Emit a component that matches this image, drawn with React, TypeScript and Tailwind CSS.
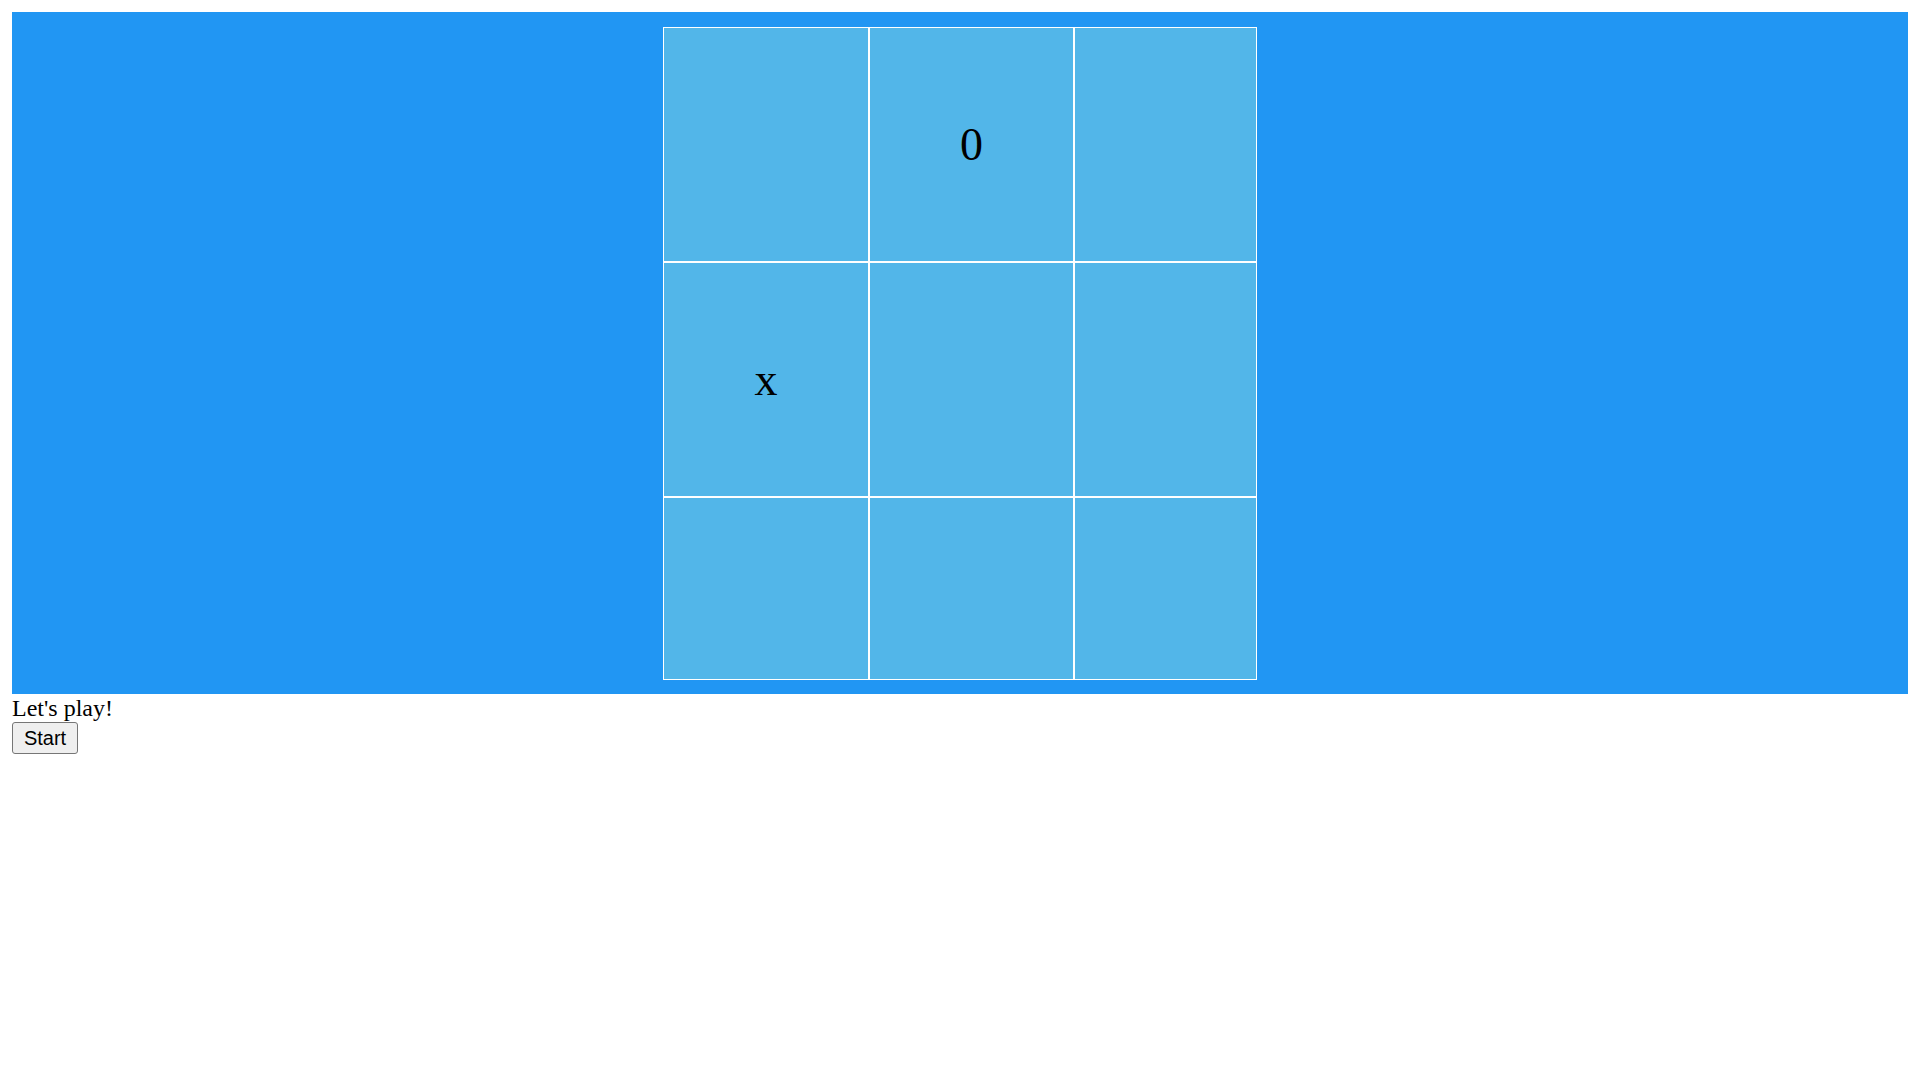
const cells: string[] = ['', '0', '', 'x', '', '', '', '', ''];

export default function App() {
  return (
    <div className="min-h-screen bg-white p-[12px] font-['Liberation_Serif',serif] text-black">
      <div className="flex justify-center bg-[#2196f3] pt-[15px] pb-[14px]">
        <div className="grid grid-cols-[206px_205px_183px] grid-rows-[235px_235px_183px]">
          {cells.map((c, i) => (
            <div
              key={i}
              className="flex items-center justify-center border border-white bg-[#52b6e9] text-[46px] leading-none"
            >
              {c}
            </div>
          ))}
        </div>
      </div>
      <div className="h-[28px] text-[24px] leading-[28px]">Let's play!</div>
      <button className="flex h-[32px] w-[66px] items-center justify-center rounded-[3px] border border-[#767676] bg-[#efefef] font-['Liberation_Sans',Arial,sans-serif] text-[20px] leading-none text-black">
        Start
      </button>
    </div>
  );
}
